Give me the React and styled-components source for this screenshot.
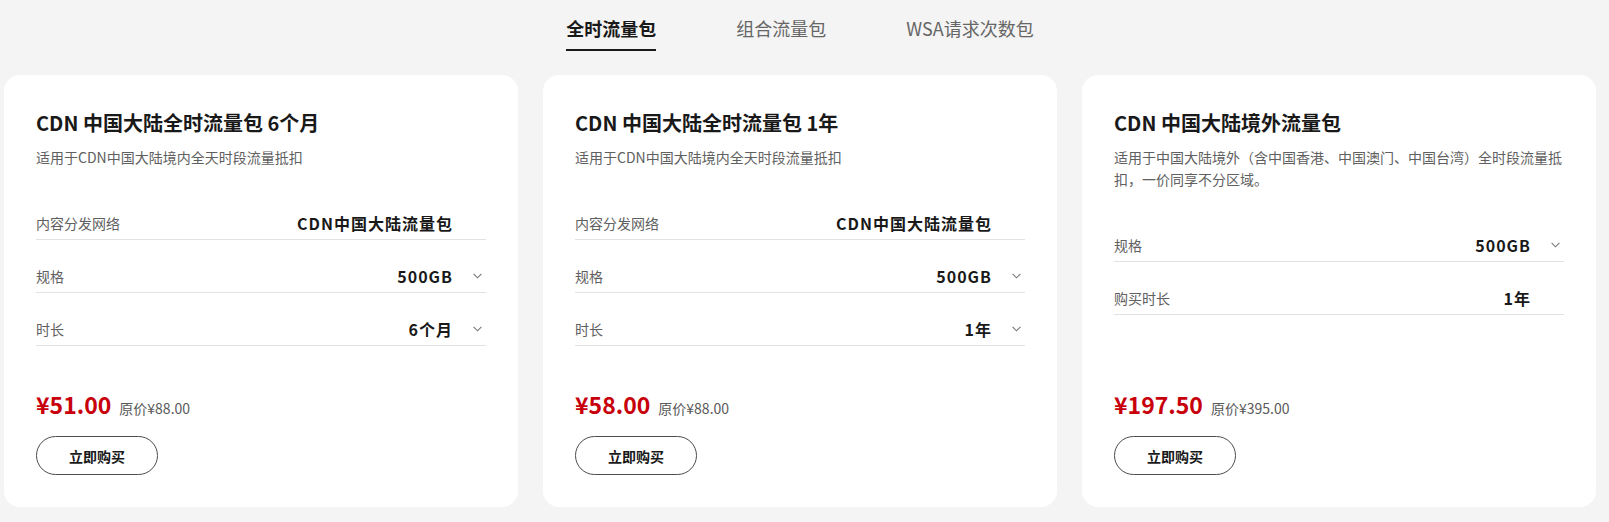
import styled, { createGlobalStyle } from "styled-components";

const GlobalStyle = createGlobalStyle`
  body {
    margin: 0;
    background: #f4f4f4;
    font-family: "Noto Sans CJK SC", "Noto Sans", sans-serif;
    color: #191919;
  }
`;

const Page = styled.div`
  width: 1592px;
  margin-left: 4px;
  padding-top: 15px;
`;

const Tabs = styled.div`
  display: flex;
  justify-content: center;
  gap: 80px;
  margin-bottom: 24px;
`;

const Tab = styled.div`
  font-size: 18px;
  line-height: 26px;
  padding-bottom: 8px;
  font-weight: ${(p) => (p.$active ? 700 : 400)};
  color: ${(p) => (p.$active ? "#191919" : "#666666")};
  border-bottom: 2px solid ${(p) => (p.$active ? "#191919" : "transparent")};
  cursor: pointer;
`;

const Cards = styled.div`
  display: grid;
  grid-template-columns: repeat(3, 514px);
  gap: 25px;
`;

const Card = styled.div`
  height: 432px;
  box-sizing: border-box;
  background: #fff;
  border-radius: 16px;
  padding: 34px 32px 32px;
  display: flex;
  flex-direction: column;
`;

const Title = styled.div`
  font-size: 20px;
  line-height: 28px;
  font-weight: 700;
  color: #191919;
`;

const Desc = styled.div`
  margin-top: 9px;
  font-size: 14px;
  line-height: 22px;
  color: #606060;
`;

const Rows = styled.div`
  margin-top: 19px;
`;

const Row = styled.div`
  display: flex;
  align-items: center;
  justify-content: space-between;
  padding: 25px 0 5px;
  line-height: 22px;
  border-bottom: 1px solid #e2e2e2;
`;

const Label = styled.span`
  font-size: 14px;
  color: #606060;
`;

const ValueWrap = styled.div`
  display: flex;
  align-items: center;
`;

const Value = styled.span`
  font-size: 16px;
  font-weight: 700;
  letter-spacing: 1px;
  color: #191919;
`;

const Arrow = styled.span`
  display: flex;
  width: 9px;
  margin-left: 20px;
  margin-right: 4px;
  color: #777;
`;

const Bottom = styled.div`
  margin-top: auto;
`;

const PriceLine = styled.div`
  display: flex;
  align-items: baseline;
  gap: 8px;
`;

const Price = styled.span`
  font-size: 23px;
  line-height: 30px;
  font-weight: 700;
  color: #c7000b;
`;

const OldPrice = styled.span`
  font-size: 14px;
  color: #595959;
`;

const BuyButton = styled.button`
  margin-top: 17px;
  width: 122px;
  height: 39px;
  border: 1px solid #4d4d4d;
  border-radius: 20px;
  background: #fff;
  font-family: inherit;
  font-size: 14px;
  font-weight: 700;
  color: #191919;
  cursor: pointer;
`;

const Chevron = () => (
  <svg width="9" height="6" viewBox="0 0 9 6" fill="none">
    <polyline points="0.6,0.8 4.5,4.8 8.4,0.8" stroke="currentColor" strokeWidth="1.1" />
  </svg>
);

const products = [
  {
    title: "CDN 中国大陆全时流量包 6个月",
    desc: "适用于CDN中国大陆境内全天时段流量抵扣",
    rows: [
      { label: "内容分发网络", value: "CDN中国大陆流量包" },
      { label: "规格", value: "500GB", select: true },
      { label: "时长", value: "6个月", select: true },
    ],
    price: "¥51.00",
    old: "原价¥88.00",
  },
  {
    title: "CDN 中国大陆全时流量包 1年",
    desc: "适用于CDN中国大陆境内全天时段流量抵扣",
    rows: [
      { label: "内容分发网络", value: "CDN中国大陆流量包" },
      { label: "规格", value: "500GB", select: true },
      { label: "时长", value: "1年", select: true },
    ],
    price: "¥58.00",
    old: "原价¥88.00",
  },
  {
    title: "CDN 中国大陆境外流量包",
    desc: "适用于中国大陆境外（含中国香港、中国澳门、中国台湾）全时段流量抵扣，一价同享不分区域。",
    rows: [
      { label: "规格", value: "500GB", select: true },
      { label: "购买时长", value: "1年" },
    ],
    price: "¥197.50",
    old: "原价¥395.00",
  },
];

const tabs = ["全时流量包", "组合流量包", "WSA请求次数包"];

const App = () => (
  <>
    <GlobalStyle />
    <Page>
      <Tabs>
        {tabs.map((t, i) => (
          <Tab key={t} $active={i === 0}>
            {t}
          </Tab>
        ))}
      </Tabs>
      <Cards>
        {products.map((p) => (
          <Card key={p.title}>
            <Title>{p.title}</Title>
            <Desc>{p.desc}</Desc>
            <Rows>
              {p.rows.map((r) => (
                <Row key={r.label}>
                  <Label>{r.label}</Label>
                  <ValueWrap>
                    <Value>{r.value}</Value>
                    <Arrow>{r.select && <Chevron />}</Arrow>
                  </ValueWrap>
                </Row>
              ))}
            </Rows>
            <Bottom>
              <PriceLine>
                <Price>{p.price}</Price>
                <OldPrice>{p.old}</OldPrice>
              </PriceLine>
              <BuyButton>立即购买</BuyButton>
            </Bottom>
          </Card>
        ))}
      </Cards>
    </Page>
  </>
);

export default App;
